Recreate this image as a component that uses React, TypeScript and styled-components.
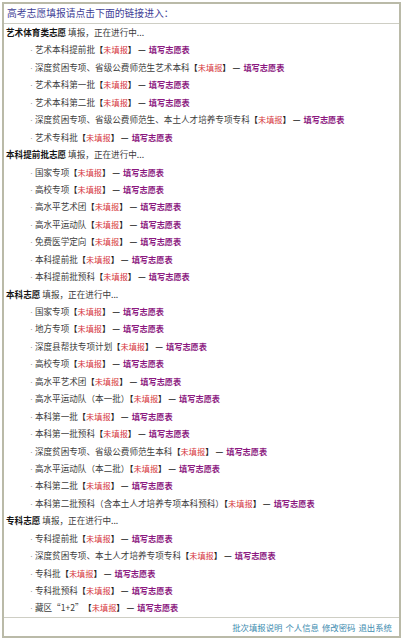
import React, { FC } from "react"
import styled, { createGlobalStyle } from "styled-components"

const GlobalStyle = createGlobalStyle`
  html, body {
    margin: 0;
    padding: 0;
    background: rgb(255, 255, 255);
  }
  body {
    font-family: "Noto Sans CJK SC", "Noto Sans", sans-serif;
  }
`

interface Section {
  title: string
  items: string[]
}

const sections: Section[] = [
  {
    title: "艺术体育类志愿",
    items: [
      "艺术本科提前批",
      "深度贫困专项、省级公费师范生艺术本科",
      "艺术本科第一批",
      "艺术本科第二批",
      "深度贫困专项、省级公费师范生、本土人才培养专项专科",
      "艺术专科批"
    ]
  },
  {
    title: "本科提前批志愿",
    items: [
      "国家专项",
      "高校专项",
      "高水平艺术团",
      "高水平运动队",
      "免费医学定向",
      "本科提前批",
      "本科提前批预科"
    ]
  },
  {
    title: "本科志愿",
    items: [
      "国家专项",
      "地方专项",
      "深度县帮扶专项计划",
      "高校专项",
      "高水平艺术团",
      "高水平运动队（本一批）",
      "本科第一批",
      "本科第一批预科",
      "深度贫困专项、省级公费师范生本科",
      "高水平运动队（本二批）",
      "本科第二批",
      "本科第二批预科（含本土人才培养专项本科预科）"
    ]
  },
  {
    title: "专科志愿",
    items: [
      "专科提前批",
      "深度贫困专项、本土人才培养专项专科",
      "专科批",
      "专科批预科",
      "藏区“1+2”"
    ]
  }
]

const footerLinks = ["批次填报说明", "个人信息", "修改密码", "退出系统"]

const Panel = styled.div`
  margin: 2px 4px 2px 2px;
  border: 2px solid rgb(186, 186, 168);
  background: rgb(255, 255, 255);
`

const Header = styled.div`
  height: 19px;
  line-height: 19px;
  padding-left: 3px;
  font-size: 9.8px;
  color: rgb(62, 62, 150);
  border-bottom: 1px solid rgb(206, 206, 196);
`

const List = styled.div`
  padding: 0 0 0 2px;
`

const Row = styled.div<{ $indent?: boolean }>`
  height: 17.45px;
  line-height: 17.45px;
  font-size: 8.6px;
  white-space: nowrap;
  color: rgb(60, 60, 60);
  padding-left: ${p => (p.$indent ? "24px" : "0")};
`

const Strong = styled.b`
  color: rgb(20, 20, 20);
  font-weight: 700;
`

const Dot = styled.span`
  font-family: "Liberation Sans", sans-serif;
  color: rgb(150, 150, 150);
  margin-right: 2px;
`

const Bracket = styled.b`
  color: rgb(30, 30, 30);
  font-size: 8.2px;
`

const Pending = styled.span`
  color: rgb(214, 54, 64);
  font-size: 8.2px;
`

const Dash = styled.b`
  color: rgb(40, 40, 40);
  margin: 0 3px 0 2px;
`

const FillLink = styled.a`
  color: rgb(139, 24, 128);
  font-weight: 700;
  font-size: 8.2px;
  text-decoration: none;
`

const Footer = styled.div`
  height: 18px;
  line-height: 18px;
  border-top: 1px solid rgb(206, 206, 196);
  display: flex;
  justify-content: flex-end;
  gap: 3px;
  padding-right: 7px;
  font-size: 8.4px;
`

const FooterLink = styled.a`
  color: rgb(62, 140, 175);
  text-decoration: none;
`

const Item: FC<{ name: string }> = ({ name }) => (
  <Row $indent>
    <Dot>·</Dot>
    {name}
    <Bracket>【</Bracket>
    <Pending>未填报</Pending>
    <Bracket>】</Bracket>
    <Dash>—</Dash>
    <FillLink href="#">填写志愿表</FillLink>
  </Row>
)

const App: FC = () => {
  return (
    <>
      <GlobalStyle />
      <Panel>
        <Header>高考志愿填报请点击下面的链接进入：</Header>
        <List>
          {sections.map(section => (
            <React.Fragment key={section.title}>
              <Row>
                <Strong>{section.title}</Strong> 填报，正在进行中...
              </Row>
              {section.items.map(item => (
                <Item key={section.title + item} name={item} />
              ))}
            </React.Fragment>
          ))}
        </List>
        <Footer>
          {footerLinks.map(l => (
            <FooterLink key={l} href="#">
              {l}
            </FooterLink>
          ))}
        </Footer>
      </Panel>
    </>
  )
}

export default App
